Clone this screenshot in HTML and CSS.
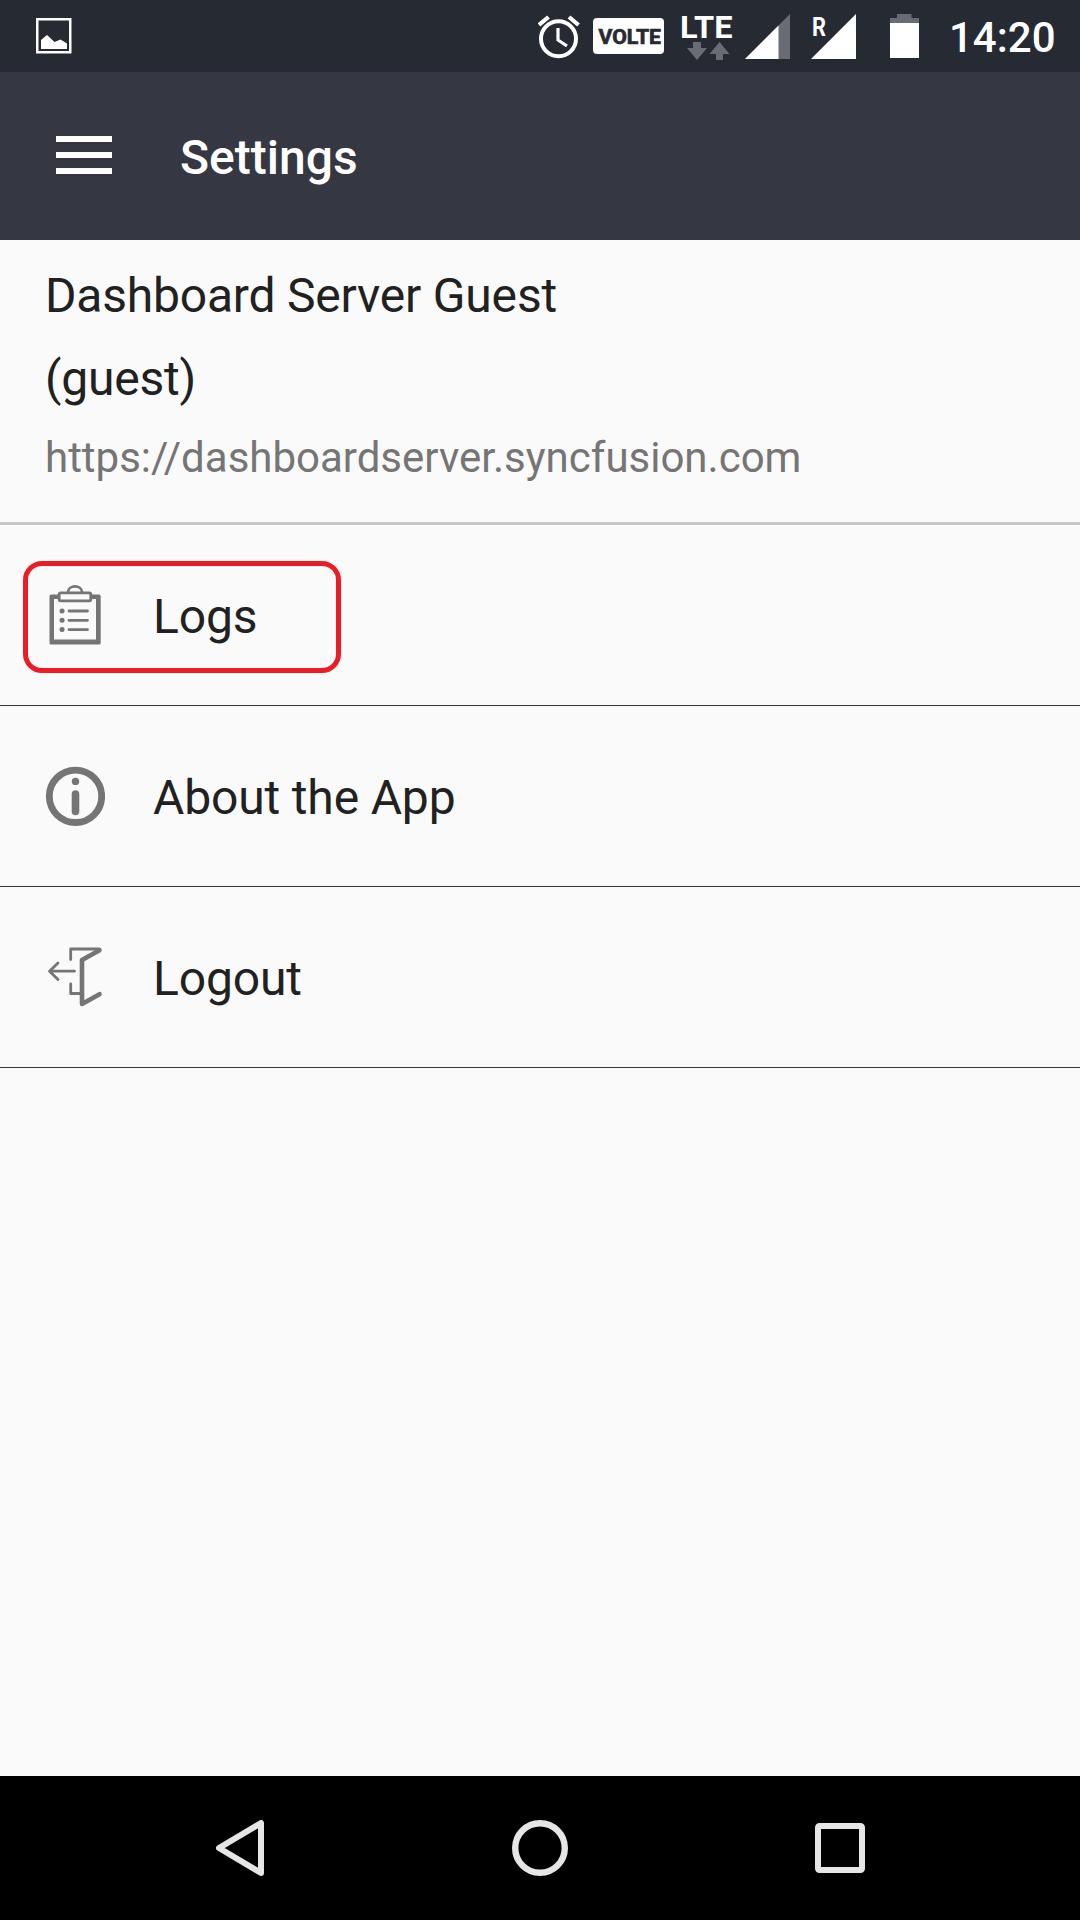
FILE: index.html
```html
<!DOCTYPE html>
<html lang="en">
<head>
<meta charset="utf-8">
<title>Settings</title>
<link rel="stylesheet" href="styles.css">
</head>
<body>
<div class="status">
  <svg class="status-picture" width="36" height="36" viewBox="0 0 36 36"><rect x="1.25" y="1.25" width="33" height="33" fill="none" stroke="#fff" stroke-width="2.5"/><path d="M5 31V22L11 17L18.500 24L24.500 21.500L31 25.500V31Z" fill="#fff"/></svg>
  <div class="status-icons">
    <svg class="alarm" width="42" height="44" viewBox="0 0 42 44"><circle cx="20.500" cy="23.700" r="17.500" fill="none" stroke="#fff" stroke-width="4"/><path d="M20 13V25L29 31" fill="none" stroke="#fff" stroke-width="3.200"/><path d="M1 10L10.500 2M31 2L40.500 10" stroke="#fff" stroke-width="4.200"/></svg>
    <svg class="volte" width="71" height="36" viewBox="0 0 71 36"><rect width="71" height="36" rx="4" fill="#fff"/><text x="5.500" y="25.500" textLength="62.500" lengthAdjust="spacingAndGlyphs" class="volte-text">VOLTE</text></svg>
    <svg class="lte" width="54" height="46" viewBox="0 0 54 46"><text x="-1" y="23" textLength="52.500" lengthAdjust="spacingAndGlyphs" class="lte-text">LTE</text><path d="M12 27H20V33H26L16 45L6 33H12ZM35 45H42V39H48.500L38.500 27L28.500 39H35Z" fill="#696c74"/></svg>
    <svg class="signal" width="45" height="45" viewBox="0 0 45 45"><path d="M0 45L45 0V45Z" fill="#696c74"/><path d="M0 45L33.500 11.500V45Z" fill="#fff"/></svg>
    <svg class="signal-r" width="45" height="45" viewBox="0 0 45 45"><path d="M0 45L45 0V45Z" fill="#fff"/><text x="1" y="21.500" textLength="14" lengthAdjust="spacingAndGlyphs" class="roaming-text">R</text></svg>
    <svg class="battery" width="29" height="44" viewBox="0 0 29 44"><path d="M0 10V4H7V0H21.500V4H29V10Z" fill="#696c74"/><path d="M0 9H29V44H0Z" fill="#fff"/></svg>
    <span class="clock">14:20</span>
  </div>
</div>
<header class="header">
  <div class="menu"><span></span><span></span><span></span></div>
  <h1>Settings</h1>
</header>
<main>
  <section class="account">
    <p class="name">Dashboard Server Guest</p>
    <p class="user">(guest)</p>
    <p class="url">https://dashboardserver.syncfusion.com</p>
  </section>
  <div class="row">
    <svg width="60" height="60" viewBox="0 0 60 60" fill="none" stroke="#757575" stroke-linejoin="round" stroke-linecap="round"><path d="M4.500 11Q4.500 9.500 6 9.500H14V14H9V54.500H51V14H46V9.500H54Q55.700 9.500 55.700 11V58Q55.700 59.500 54 59.500H6Q4.500 59.500 4.500 58Z" fill="#757575" stroke="none"/><rect x="14.200" y="7.800" width="31.600" height="8" rx="1.500" stroke-width="2.800"/><path d="M23 7C23.500 -.5 36.500 -.5 37 7" stroke-width="2.600"/><path d="M24 26H42.500M24 35.300H42.500M24 44.600H42.500" stroke-width="2.800"/><path d="M17 26H17.100M17 35.300H17.100M17 44.600H17.100" stroke-width="5"/></svg>
    <span>Logs</span>
    <div class="highlight"></div>
  </div>
  <div class="row">
    <svg width="60" height="60" viewBox="0 0 60 60" fill="none" stroke="#757575" stroke-linecap="round"><circle cx="30.500" cy="30.300" r="26.200" stroke-width="6.800"/><path d="M30.500 28V45.500" stroke-width="7.600"/><circle cx="30.500" cy="15.400" r="3.700" fill="#757575" stroke="none"/></svg>
    <span>About the App</span>
  </div>
  <div class="row">
    <svg width="60" height="60" viewBox="0 0 60 60" fill="none" stroke="#757575" stroke-linecap="round" stroke-linejoin="round"><path d="M25.700 12.500V2H54M25.700 37V46.500H35M4.500 24.200H29.500M13 16L4.500 24.200L13 32.500" stroke-width="2.800"/><path d="M54.500 3.200L37 13V57L54.500 47.200" stroke-width="4.600"/></svg>
    <span>Logout</span>
  </div>
</main>
<nav class="navbar">
  <svg width="48" height="56" viewBox="0 0 48 56"><path d="M45 3V53L3 28Z" fill="none" stroke="#e6e6e6" stroke-width="6" stroke-linejoin="round"/></svg>
  <svg width="56" height="56" viewBox="0 0 56 56"><circle cx="28" cy="28" r="24.800" fill="none" stroke="#e6e6e6" stroke-width="6.400"/></svg>
  <svg width="50" height="50" viewBox="0 0 50 50"><rect x="3" y="3" width="44" height="44" rx="1.500" fill="none" stroke="#e6e6e6" stroke-width="6"/></svg>
</nav>
</body>
</html>
```
FILE: styles.css
```css
* { box-sizing: border-box; }
html, body, h1, p { margin: 0; }
body {
  width: 1080px;
  height: 1920px;
  display: flex;
  flex-direction: column;
  overflow: hidden;
  background: #fafafa;
  color: #212121;
  font-family: Roboto, sans-serif;
  font-size: 48px;
}
svg { display: block; flex: none; }

.status {
  height: 72px;
  flex: none;
  display: flex;
  justify-content: space-between;
  align-items: flex-start;
  padding: 0 25px 0 36px;
  background: #262a33;
  color: #fff;
}
.status-picture { margin-top: 18px; }
.status-icons { display: flex; align-items: flex-start; }
.alarm { margin: 15px 13px 0 0; }
.volte { margin: 18px 17px 0 0; }
.lte { margin: 15px 10px 0 0; overflow: visible; }
.signal { margin: 14px 21px 0 0; }
.signal-r { margin: 14px 34px 0 0; overflow: visible; }
.battery { margin: 14px 30px 0 0; }
.clock { width: 106px; font-size: 42px; font-weight: 500; line-height: 76px; white-space: nowrap; }
.volte-text { font: 700 21px Roboto, sans-serif; fill: #262a33; stroke: #262a33; stroke-width: .7px; }
.lte-text { font: 700 32px Roboto, sans-serif; fill: #fff; }
.roaming-text { font: 700 25px Roboto, sans-serif; fill: #fff; }

.header {
  height: 168px;
  flex: none;
  display: flex;
  align-items: flex-start;
  padding: 0 56px;
  background: #353843;
  color: #fff;
}
.menu { width: 56px; margin: 64px 68px 0 0; display: flex; flex-direction: column; gap: 10px; }
.menu span { height: 6px; background: #fff; }
h1 { font-size: 48px; font-weight: 500; line-height: 171px; }

main { flex: 1; }
.account { height: 285px; padding: 14px 45px 0; border-bottom: 3px solid #c8c7cc; }
.name, .user { line-height: 83px; letter-spacing: -0.2px; }
.url { margin-top: 1px; font-size: 42px; line-height: 74px; color: #757575; }

.row {
  position: relative;
  height: 181px;
  display: flex;
  align-items: center;
  gap: 48px;
  padding-left: 45px;
  border-bottom: 1px solid #353843;
}
.row span { line-height: 60px; padding-top: 3px; letter-spacing: -0.15px; }
.highlight {
  position: absolute;
  left: 23px;
  top: 36px;
  width: 318px;
  height: 112px;
  border: 5px solid #ed1c24;
  border-radius: 19px;
}

.navbar {
  height: 144px;
  flex: none;
  display: flex;
  gap: 248px;
  align-items: center;
  padding-left: 216px;
  background: #000;
}
.navbar svg:last-child { margin-left: -1px; }
```
